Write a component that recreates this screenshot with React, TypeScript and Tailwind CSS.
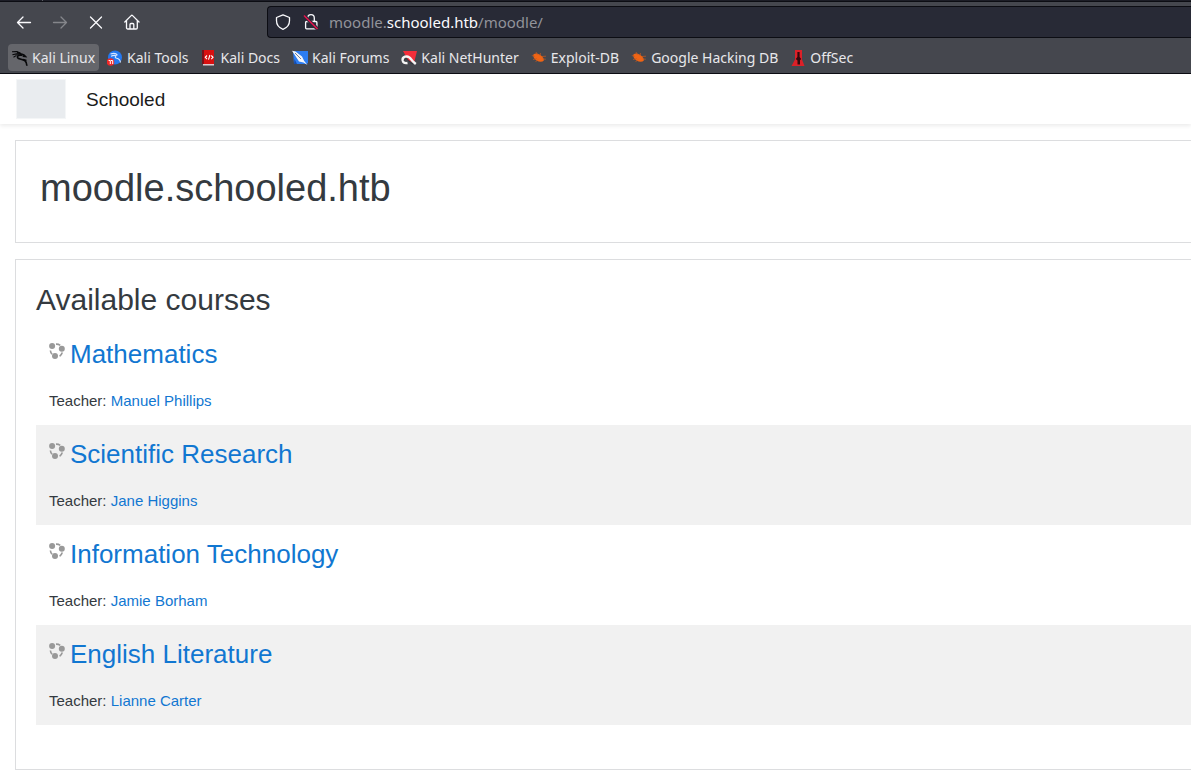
import type { ReactNode } from 'react';

function Dragon({ color }: { color: string }) {
  return (
    <svg viewBox="0 0 16 16" className="size-4" fill="none" stroke={color} aria-hidden="true">
      <path d="M0 1.800 5 1.600l3.500 1.600M.4 4.800l4-.9 3.500.2M1.500 7.200 4.500 5.400" strokeWidth="1.100" />
      <path d="M5 2.600c2.400.3 4.400 1.200 4.600 2.600C6.600 4.700 5 5.800 5.600 7.600c.7 1.800 5.400 1.400 7.500 3.300 1.300 1.200 1.700 2.600 1.800 4.800" strokeWidth="1.700" />
      <path d="M9.500 4c1.500.2 3.400 1.300 4.300 2.600l-3-.4M11 9.500l3.500 1" strokeWidth="1.400" />
    </svg>
  );
}

function ToolsIcon() {
  return (
    <svg viewBox="0 0 16 16" className="size-4" fill="none" aria-hidden="true">
      <circle cx="8" cy="7.500" r="7" fill="#2478f0" />
      <path d="M3.500 4c3-1 6-.3 7 1.300M4 6.200c2-.9 3.500-1 5-.5-1.200.9-1 2.200.6 2.500 2.200.3 3.600 1.500 3.900 4.300" stroke="#d8e6ff" strokeWidth="1.100" />
      <circle cx="3.500" cy="12" r="3.800" fill="#f02828" />
      <path d="M1.600 10.500h1.700v3.500M4 10.500h1.700v3.500" stroke="#fff" strokeWidth="1" />
    </svg>
  );
}

function DocsIcon() {
  return (
    <svg viewBox="0 0 16 16" className="size-4" fill="none" aria-hidden="true">
      <path d="M1 0h12v14H1z" fill="#d81010" />
      <path d="M1 0h2v14H1z" fill="#7c1018" />
      <path d="M2 14h11v1.500H2z" fill="#dfc9ce" />
      <path d="M6 5.500 4.300 7.300 6 9.100M10.300 5.500 12 7.300l-1.700 1.800M8.900 5 7.500 9.600" stroke="#fff" strokeWidth="1.100" />
    </svg>
  );
}

function ForumsIcon() {
  return (
    <svg viewBox="0 0 16 16" className="size-4" fill="none" aria-hidden="true">
      <path d="M1 1h15v12l-1.500 1H2z" fill="#2c7df2" />
      <path d="m0 .8 3.500.7 6.500 5 2.200 4.500 3.300 4-4-2.500-4.500-1z" fill="#f4f6fa" />
      <path d="m3 3 6 6" stroke="#50607c" strokeWidth=".8" />
      <path d="m2.500 9 2.500 5H2z" fill="#174caa" />
    </svg>
  );
}

function NetHunterIcon() {
  return (
    <svg viewBox="0 0 16 16" className="size-4" fill="none" aria-hidden="true">
      <path d="M2 1h14l-3 12L7 10z" fill="#f42e3a" />
      <path d="M6.500 13C1 14 .2 8 4 6.700c3.500-1 5 .8 6.200 2.700 1 1.600 2.300 2.800 4.600 4.600" stroke="#f5f5f5" strokeWidth="2.400" />
      <path d="M3 10.500c1-2.500 4-2 5 .5 1 1.800 2 2.500 4 3" stroke="#30333a" strokeWidth=".9" />
    </svg>
  );
}

function ExploitIcon() {
  return (
    <svg viewBox="0 0 16 16" className="size-4" aria-hidden="true">
      <path d="M2.500 4.200C4.500 2.800 7 3.300 9.500 5c2.400 1.700 4 4.200 3.200 5.800-1.500 1.400-4.700 1.300-7.200-.4C3 8.800 1.700 6 2.500 4.200z" fill="#f06414" />
      <path d="M.8 5.500 4 6.500M2 9.500l4-1M5 2l1.500 3M9.500 3 9 6M11 6.500l4-.3M11.500 9l3.300.2M4.500 12 7 9.500" stroke="#c95a20" strokeWidth=".7" />
    </svg>
  );
}

function OffSecIcon() {
  return (
    <svg viewBox="0 0 16 16" className="size-4" aria-hidden="true">
      <path d="M5 0h7v9.500l2.500 6.500h-13L5 9.500z" fill="#dc2028" />
      <path d="M7.400 2h2.200v5l1.600 2-1.200 1.300V14.500H7.500v-4L5.800 9l1.600-2z" fill="#30090d" />
    </svg>
  );
}

function CourseIcon() {
  return (
    <svg viewBox="0 0 16 16" className="size-4 shrink-0" fill="none" stroke="#999" aria-hidden="true">
      <path d="M7 1.100c1.600-.1 3 .3 4.300 1.300M1.400 7.500c.1 1.500.7 2.800 1.700 3.800M13.300 9.600c-.5 1.600-1.400 2.800-2.700 3.600" strokeWidth="1.600" />
      <g fill="#999" stroke="none">
        <circle cx="3.100" cy="3.100" r="3" />
        <circle cx="12.800" cy="5.700" r="3" />
        <circle cx="6" cy="13" r="3" />
      </g>
    </svg>
  );
}

const bookmarks: { name: string; icon: ReactNode }[] = [
  { name: 'Kali Linux', icon: <Dragon color="#08090b" /> },
  { name: 'Kali Tools', icon: <ToolsIcon /> },
  { name: 'Kali Docs', icon: <DocsIcon /> },
  { name: 'Kali Forums', icon: <ForumsIcon /> },
  { name: 'Kali NetHunter', icon: <NetHunterIcon /> },
  { name: 'Exploit-DB', icon: <ExploitIcon /> },
  { name: 'Google Hacking DB', icon: <ExploitIcon /> },
  { name: 'OffSec', icon: <OffSecIcon /> },
];

const courses = [
  { title: 'Mathematics', teacher: 'Manuel Phillips' },
  { title: 'Scientific Research', teacher: 'Jane Higgins' },
  { title: 'Information Technology', teacher: 'Jamie Borham' },
  { title: 'English Literature', teacher: 'Lianne Carter' },
];

function NavButton({ label, disabled, children }: { label: string; disabled?: boolean; children: ReactNode }) {
  return (
    <button
      type="button"
      aria-label={label}
      disabled={disabled}
      className="flex size-8 items-center justify-center text-[#fbfbfe] disabled:text-[#85868b]"
    >
      <svg viewBox="0 0 16 16" className="size-4" fill="none" stroke="currentColor" strokeWidth="1.300" strokeLinecap="round" strokeLinejoin="round">
        {children}
      </svg>
    </button>
  );
}

function BrowserBar() {
  return (
    <div className="border-b border-[#0c0d13] bg-[#45474e] font-['Noto_Sans',sans-serif]">
      <div className="flex h-0.5 border-b border-[#0c0d13] bg-[#1c1d26] pl-[42px]">
        <span className="h-px w-px bg-[#5b5d63]" />
      </div>
      <div className="flex items-center pt-1 pl-2">
        <div className="flex gap-1">
          <NavButton label="Back">
            <path d="M14.500 8.500H1.500M7 3 1.500 8.500 7 14" />
          </NavButton>
          <NavButton label="Forward" disabled>
            <path d="M1.500 8.500h13M9 3l5.500 5.500L9 14" />
          </NavButton>
          <NavButton label="Stop">
            <path d="m2.500 3 11 11M13.500 3l-11 11" />
          </NavButton>
          <NavButton label="Home">
            <path d="M.8 8 7.200 1.600a1 1 0 0 1 1.400 0L15 8M2.500 6.500v7.300a1.200 1.200 0 0 0 1.200 1.200h8.400a1.200 1.200 0 0 0 1.200-1.200V6.500M6 14.800v-4.300a1 1 0 0 1 1-1h1.800a1 1 0 0 1 1 1v4.300" />
          </NavButton>
        </div>
        <div className="ml-[119px] flex h-8 flex-1 items-center rounded-l border border-r-0 border-[#0c0d13] bg-[#282a36] pl-[7px]">
          <svg viewBox="0 0 16 16" className="size-4" fill="none" stroke="#fbfbfe" strokeWidth="1.300" strokeLinejoin="round" aria-hidden="true">
            <path d="M8 .8 14.500 3.500v3.300c0 3.600-2.600 7-6.500 8.500-3.900-1.500-6.500-4.900-6.500-8.500V3.500z" />
          </svg>
          <svg viewBox="0 0 16 16" className="ml-3 size-4" fill="none" stroke="#fbfbfe" strokeWidth="1.300" strokeLinejoin="round" aria-hidden="true">
            <path d="M4.700 7.500V4a3.300 3.300 0 0 1 6.600 0v3.500M3.600 7.500h9.300a1 1 0 0 1 1 1v5.300a1 1 0 0 1-1 1H3.600a1 1 0 0 1-1-1V8.500a1 1 0 0 1 1-1z" />
            <path d="m1 1.500 13.500 13.500" stroke="#282a36" strokeWidth="3.500" />
            <path d="m1 1.500 13.500 13.500" stroke="#e8124d" strokeWidth="1.500" />
          </svg>
          <p className="ml-[10px] text-[15px] leading-5 text-[#92939a]">
            moodle.<span className="text-[#fbfbfe]">schooled.htb</span>/moodle/
          </p>
        </div>
      </div>
      <nav aria-label="Bookmarks" className="flex gap-1 px-2 pt-1.5 pb-0.5">
        {bookmarks.map((b) => (
          <button
            key={b.name}
            type="button"
            className="flex h-[27px] items-center gap-1 rounded px-1 text-[14px] whitespace-nowrap text-[#e8e8eb] first:bg-[#65666b]"
          >
            {b.icon}
            {b.name}
          </button>
        ))}
      </nav>
    </div>
  );
}

export default function App() {
  return (
    <div className="min-h-screen bg-white font-['Liberation_Sans',sans-serif] text-[15px] text-[#343a40]">
      <BrowserBar />
      <header className="flex h-[50px] items-center gap-5 bg-white pl-4 shadow-[0_2px_4px_rgba(0,0,0,0.08)]">
        <span className="h-10 w-[50px] border border-[#f4f6f7] bg-[#e9ecef]" />
        <a href="#home" className="text-[19px] leading-7 pt-0.5 text-[#1c1c1c]">Schooled</a>
      </header>
      <main className="flex flex-col gap-4 pt-4 pl-[15px]">
        <section className="border border-r-0 border-[#dcdddf] px-6 pt-[25px] pb-[31px]">
          <h1 className="text-[38px] leading-[45px]">moodle.schooled.htb</h1>
        </section>
        <section className="border border-r-0 border-[#dcdddf] pt-[22px] pb-11 pl-5">
          <h2 className="pb-[7px] text-[30px] leading-9">Available courses</h2>
          <ul>
            {courses.map((c) => (
              <li key={c.title} className="px-[13px] pt-3 pb-[13px] even:bg-[#f1f1f1]">
                <div className="flex gap-[5px]">
                  <div className="pt-1.5">
                    <CourseIcon />
                  </div>
                  <h3 className="text-[26px] leading-[34px]">
                    <a href="#course" className="text-[#1177d1]">{c.title}</a>
                  </h3>
                </div>
                <p className="pt-[19px] leading-[22px]">
                  Teacher: <a href="#teacher" className="text-[#1177d1]">{c.teacher}</a>
                </p>
              </li>
            ))}
          </ul>
        </section>
      </main>
    </div>
  );
}
